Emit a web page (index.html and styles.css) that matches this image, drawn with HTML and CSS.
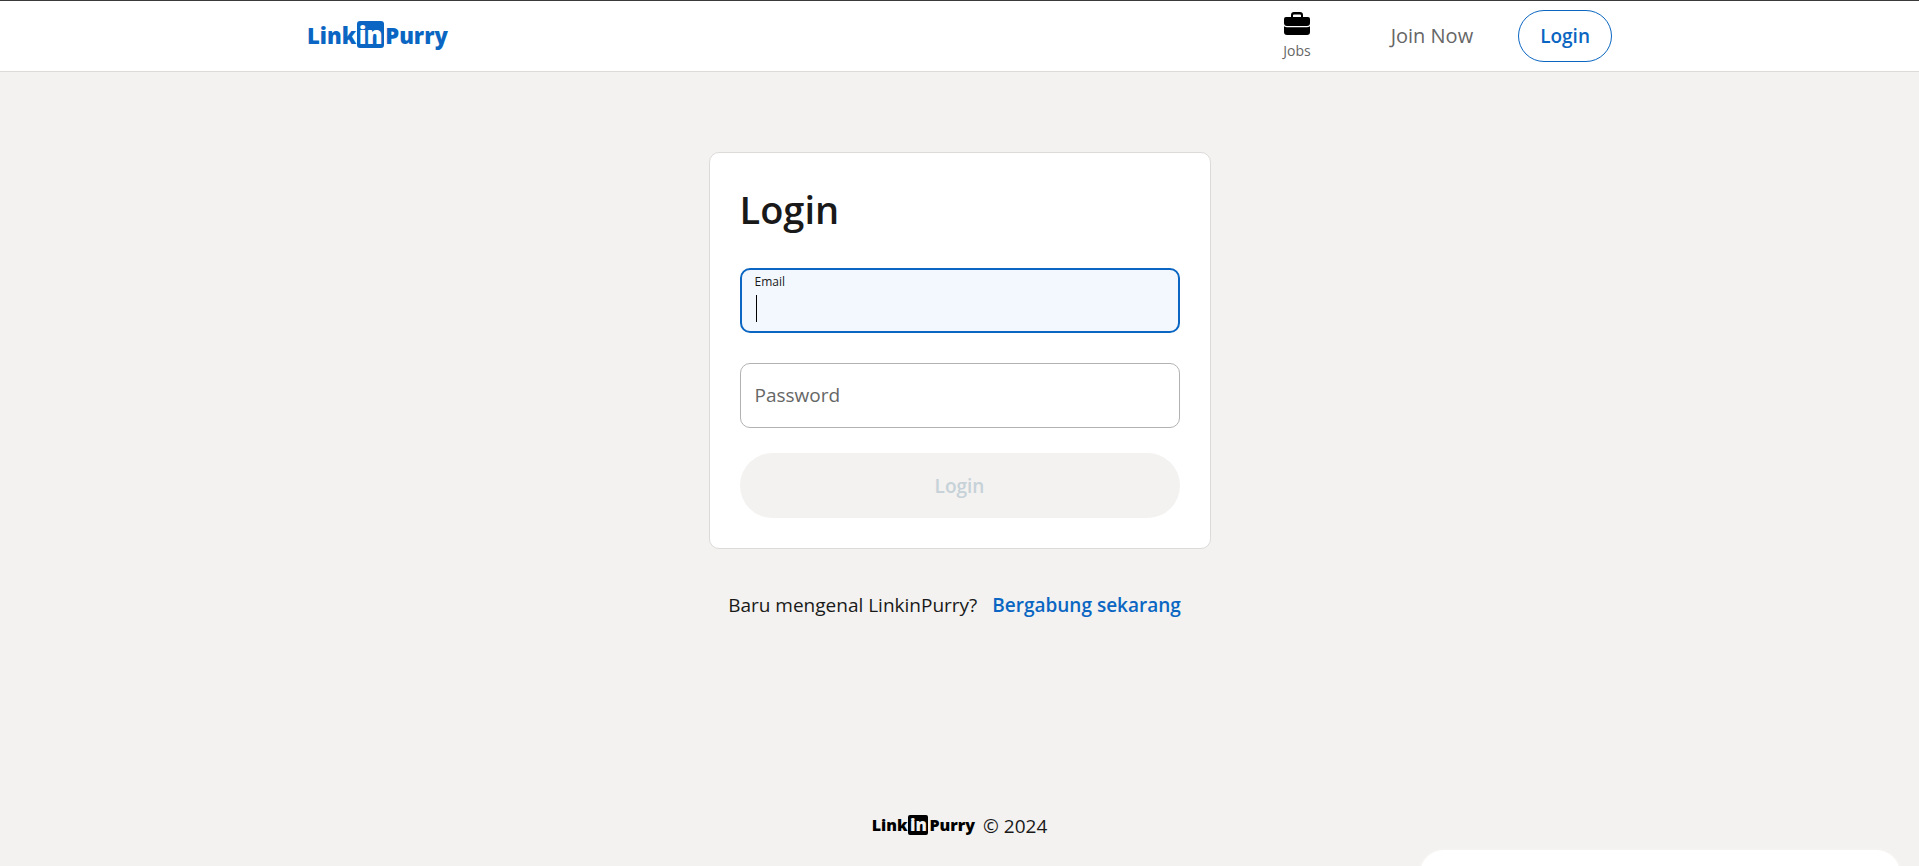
FILE: index.html
```html
<!DOCTYPE html>
<html lang="id">
<head>
<meta charset="utf-8">
<meta name="viewport" content="width=device-width, initial-scale=1">
<title>Login | LinkinPurry</title>
<link rel="stylesheet" href="styles.css">
</head>
<body>
<header class="header">
  <a class="logo" href="#"><span class="logo-link">Link</span><span class="logo-in">in</span><span>Purry</span></a>
  <nav class="nav">
    <a class="nav-jobs" href="#">
      <svg class="nav-icon" viewBox="0 0 26 23" aria-hidden="true">
        <path fill-rule="evenodd" d="M7 5V3a3 3 0 0 1 3-3h6a3 3 0 0 1 3 3v2h5a2 2 0 0 1 2 2v4a3 3 0 0 1-3 3H3a3 3 0 0 1-3-3V7a2 2 0 0 1 2-2zM9 5h8V3.500a1 1 0 0 0-1-1h-6a1 1 0 0 0-1 1z"/>
        <path d="M0 14.300q1.500 1 3 1h20q1.500 0 3-1V20a3 3 0 0 1-3 3H3a3 3 0 0 1-3-3z"/>
      </svg>
      <span>Jobs</span>
    </a>
    <a class="nav-join" href="#">Join Now</a>
    <a class="nav-login" href="#">Login</a>
  </nav>
</header>
<main class="main">
  <form class="card">
    <h1 class="title">Login</h1>
    <div class="field field-active">
      <label class="field-label" for="email">Email</label>
      <input class="field-input" id="email" type="email">
      <span class="caret"></span>
    </div>
    <div class="field">
      <input class="field-input" id="password" type="password" placeholder="Password" aria-label="Password">
    </div>
    <button class="submit" type="submit" disabled>Login</button>
  </form>
  <p class="join">Baru mengenal LinkinPurry? <a class="join-link" href="#">Bergabung sekarang</a></p>
</main>
<footer class="footer">
  <span class="logo logo-small"><span class="logo-link">Link</span><span class="logo-in">in</span><span>Purry</span></span>
  <span>© 2024</span>
</footer>
<aside class="sheet"></aside>
</body>
</html>
```
FILE: styles.css
```css
* { box-sizing: border-box; }

body {
  display: flex;
  flex-direction: column;
  min-height: 100vh;
  margin: 0;
  background: #f3f2f0;
  color: #191919;
  font: 19px/28px "Segoe UI", "Open Sans", "Noto Sans", sans-serif;
}

a { color: inherit; text-decoration: none; }

.header {
  display: flex;
  align-items: center;
  justify-content: space-between;
  height: 72px;
  padding: 0 16%;
  background: #fff;
  border-top: 1px solid #3a3a3a;
  border-bottom: 1px solid #dcdbd9;
}

.logo {
  display: flex;
  align-items: baseline;
  padding-bottom: 2px;
  color: #0a66c2;
  font-size: 22px;
  font-weight: 800;
  line-height: 27px;
}

.logo-in {
  width: 27px;
  margin: 0 1px;
  border-radius: 3px;
  background: #0a66c2;
  color: #fff;
  font-size: 24px;
  text-align: center;
}

.nav { display: flex; align-items: center; }

.nav-jobs {
  display: flex;
  flex-direction: column;
  align-items: center;
  gap: 6px;
  color: #666;
  font-size: 14px;
  line-height: 20px;
}

.nav-icon { width: 26px; height: 23px; fill: #000; }

.nav-join {
  margin: 0 45px 0 80px;
  color: #666;
  font-size: 20px;
  font-weight: 500;
}

.nav-login {
  padding: 11px 21px;
  border: 1px solid #0a66c2;
  border-radius: 26px;
  color: #0a66c2;
  font-weight: 600;
}

.main {
  display: flex;
  flex: 1;
  flex-direction: column;
  align-items: center;
  padding-top: 80px;
}

.card {
  width: 100%;
  max-width: 502px;
  padding: 30px;
  border: 1px solid #dcdbd9;
  border-radius: 10px;
  background: #fff;
}

.title {
  margin: 0 0 32px;
  font-size: 38px;
  font-weight: 600;
  line-height: 53px;
}

.field {
  position: relative;
  height: 65px;
  margin-bottom: 30px;
  border: 1px solid #b2b2b2;
  border-radius: 10px;
}

.field + .field { margin-bottom: 25px; }

.field-active {
  border: 2px solid #0a66c2;
  background: #f3f8ff;
}

.field-label {
  position: absolute;
  top: 3px;
  left: 13px;
  font-size: 12px;
  line-height: 18px;
}

.field-input {
  width: 100%;
  height: 100%;
  padding: 0 14px 2px;
  border: 0;
  outline: 0;
  background: none;
  color: inherit;
  font: inherit;
}

.field-input::placeholder { color: #666; }

.caret {
  position: absolute;
  top: 25px;
  left: 14px;
  width: 1px;
  height: 27px;
  background: #000;
}

.submit {
  display: block;
  width: 100%;
  height: 65px;
  border: 0;
  border-radius: 33px;
  background: #f3f2f0;
  color: #c6d1d8;
  font: inherit;
  font-weight: 600;
}

.join { margin: 42px 10px 0 0; }

.join-link {
  margin-left: 10px;
  color: #0a66c2;
  font-weight: 600;
}

.footer {
  display: flex;
  align-items: center;
  justify-content: center;
  gap: 8px;
  padding-bottom: 26px;
}

.logo-small { color: #000; font-size: 16px; line-height: 20px; }
.logo-small .logo-in {
  width: 20px;
  border-radius: 2px;
  background: #000;
  color: #f3f2f0;
  font-size: 17px;
}

/* Bottom sheet, mostly below the fold */
.sheet {
  position: fixed;
  right: 19px;
  bottom: -32px;
  width: 25%;
  height: 48px;
  border-radius: 24px 24px 0 0;
  background: #fff;
  box-shadow: 0 0 4px rgba(255, 255, 255, 0.5);
}
```
